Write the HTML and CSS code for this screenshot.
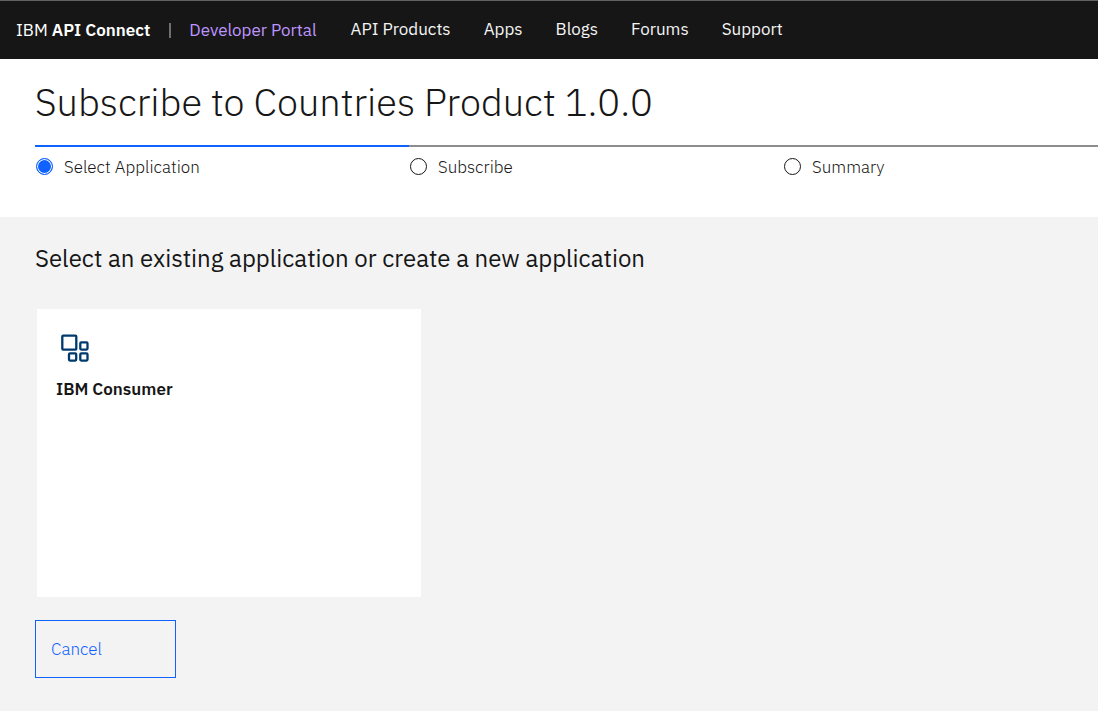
FILE: index.html
```html
<!DOCTYPE html>
<html lang="en">
<head>
<meta charset="utf-8">
<title>Subscribe to Countries Product 1.0.0</title>
<link rel="stylesheet" href="styles.css">
</head>
<body>
<header class="header">
  <a class="brand" href="#"><span>IBM <b>API Connect</b></span><span class="divider"></span><span class="portal">Developer Portal</span></a>
  <nav class="nav">
    <a href="#">API Products</a>
    <a href="#">Apps</a>
    <a href="#">Blogs</a>
    <a href="#">Forums</a>
    <a href="#">Support</a>
  </nav>
</header>
<section class="intro">
  <h1>Subscribe to Countries Product 1.0.0</h1>
  <div class="steps">
    <label class="step active"><input type="radio" name="step" checked>Select Application</label>
    <label class="step"><input type="radio" name="step">Subscribe</label>
    <label class="step"><input type="radio" name="step">Summary</label>
  </div>
</section>
<main class="main">
  <h2>Select an existing application or create a new application</h2>
  <a class="card" href="#">
    <svg class="card-icon" width="28" height="28" viewBox="0 0 28 28" fill="none" stroke="#003a6d" stroke-width="2.3" aria-hidden="true">
      <rect x="1.3" y="1.6" width="14" height="14" rx="0.8"/>
      <rect x="19.3" y="8.4" width="7.2" height="7.2" rx="1"/>
      <rect x="8" y="19.4" width="7.2" height="7.2" rx="1"/>
      <rect x="19.3" y="19.4" width="7.2" height="7.2" rx="1"/>
    </svg>
    <span class="card-title">IBM Consumer</span>
  </a>
  <button class="cancel" type="button">Cancel</button>
</main>
</body>
</html>
```
FILE: styles.css
```css
* { box-sizing: border-box; }
html { height: 100%; }
body {
  margin: 0;
  min-height: 100%;
  display: flex;
  flex-direction: column;
  background: #fff;
  color: #161616;
  font: 17px/24px "IBM Plex Sans", "Open Sans", sans-serif;
}
a { color: inherit; text-decoration: none; }
.header {
  display: flex;
  align-items: center;
  height: 59px;
  padding: 0 16px;
  border-top: 1px solid #5f6165;
  background: #161616;
  color: #fff;
  white-space: nowrap;
}
.brand { display: flex; align-items: center; }
.brand b { font-weight: 600; }
.divider { width: 2px; height: 15px; margin: 0 18px 0 19px; background: #6f6f6f; }
.portal { color: #be95ff; }
.nav { display: flex; gap: 33px; padding-bottom: 2px; margin-left: 34px; color: #f4f4f4; }
.intro { padding: 19px 0 38px 35px; }
h1 { margin: 0 0 19px; font-size: 38px; line-height: 48px; font-weight: 300; }
.steps {
  display: grid;
  grid-template-columns: 19fr 19fr 16fr;
}
.step {
  display: flex;
  align-items: center;
  gap: 11px;
  height: 34px;
  padding: 7px 0 0 1px;
  border-top: 2px solid #8d8d8d;
  font-weight: 300;
}
.step.active { border-color: #0f62fe; }
.step input {
  appearance: none;
  width: 17px;
  height: 17px;
  margin: 0;
  border: 1px solid #161616;
  border-radius: 50%;
}
.step input:checked {
  border-color: #0f62fe;
  background: #0f62fe;
  box-shadow: inset 0 0 0 1px #fff;
}
.main {
  flex: 1;
  padding: 25px 35px 33px;
  background: #f3f3f3;
}
h2 { margin: 0; font-size: 24px; line-height: 32px; font-weight: 400; }
.card {
  display: block;
  width: 384px;
  height: 288px;
  margin: 35px 2px 23px;
  padding: 25px 19px;
  background: #fff;
}
.card-icon { display: block; margin: 0 0 15px 5px; }
.card-title { font-weight: 600; }
.cancel {
  width: 141px;
  height: 58px;
  padding: 0 15px;
  border: 1px solid #0f62fe;
  background: transparent;
  color: #0f62fe;
  font: inherit;
  font-weight: 300;
  text-align: left;
}
```
